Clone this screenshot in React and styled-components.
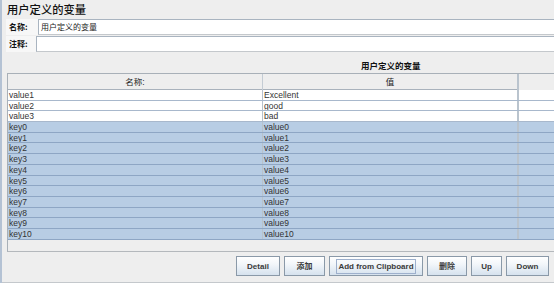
import React from "react";
import styled, { createGlobalStyle } from "styled-components";

const GlobalStyle = createGlobalStyle`
  html, body {
    margin: 0;
    padding: 0;
    background: #eeeeee;
  }
  body {
    font-family: "Liberation Sans", "Noto Sans CJK SC", Arial, sans-serif;
  }
`;

const rows = [
  { key: "value1", value: "Excellent", selected: false },
  { key: "value2", value: "good", selected: false },
  { key: "value3", value: "bad", selected: false },
  ...Array.from({ length: 11 }, (_, i) => ({
    key: `key${i}`,
    value: `value${i}`,
    selected: true,
  })),
];

const buttons = [
  { label: "Detail", width: 44 },
  { label: "添加", width: 41 },
  { label: "Add from Clipboard", width: 94, focused: true },
  { label: "删除", width: 40 },
  { label: "Up", width: 31 },
  { label: "Down", width: 43 },
];

export default function App() {
  return (
    <>
      <GlobalStyle />
      <Page>
        <Title>用户定义的变量</Title>
        <FieldRow>
          <FieldLabel>名称:</FieldLabel>
          <FieldBox $offset={36}>用户定义的变量</FieldBox>
        </FieldRow>
        <FieldRow>
          <FieldLabel>注释:</FieldLabel>
          <FieldBox $offset={34} />
        </FieldRow>
        <TableTitle>用户定义的变量</TableTitle>
        <ScrollPane>
          <HeaderRow>
            <HeaderCell>名称:</HeaderCell>
            <HeaderCell>值</HeaderCell>
            <ExtraCell $header />
          </HeaderRow>
          {rows.map((r) => (
            <Row key={r.key} $selected={r.selected}>
              <Cell>{r.key}</Cell>
              <Cell>{r.value}</Cell>
              <ExtraCell />
            </Row>
          ))}
        </ScrollPane>
        <ButtonBar>
          {buttons.map((b) => (
            <Button key={b.label} $width={b.width}>
              <FocusRing $focused={b.focused}>{b.label}</FocusRing>
            </Button>
          ))}
        </ButtonBar>
        <BottomRule />
      </Page>
    </>
  );
}

const Page = styled.div`
  width: 554px;
  height: 283px;
  box-sizing: border-box;
  overflow: hidden;
  background: #eeeeee;
  border-left: 2px solid #b4c2d4;
  display: flex;
  flex-direction: column;
  color: #222;
`;

const Title = styled.div`
  height: 19px;
  line-height: 18px;
  padding-left: 5px;
  font-size: 11.3px;
  font-weight: 500;
  font-family: "Noto Sans CJK SC", sans-serif;
  color: #111;
  flex-shrink: 0;
`;

const FieldRow = styled.div`
  height: 16px;
  margin-left: 4px;
  margin-bottom: 1px;
  display: flex;
  align-items: stretch;
  background: #f7f7f7;
  flex-shrink: 0;
`;

const FieldLabel = styled.div`
  width: 30px;
  padding-left: 3px;
  font-size: 8px;
  font-weight: bold;
  line-height: 16px;
  font-family: "Noto Sans CJK SC", sans-serif;
  color: #111;
`;

const FieldBox = styled.div`
  flex: 1;
  margin-left: ${(p) => p.$offset - 37}px;
  background: #ffffff;
  border-top: 1px solid #a9b4c0;
  border-left: 1px solid #a9b4c0;
  border-bottom: 1px solid #c4c8cc;
  font-size: 8px;
  line-height: 14px;
  padding-left: 2px;
  font-family: "Noto Sans CJK SC", sans-serif;
  color: #222;
`;

const TableTitle = styled.div`
  margin-top: 5px;
  height: 15px;
  line-height: 14px;
  padding-left: 359px;
  font-size: 8.5px;
  font-weight: bold;
  font-family: "Noto Sans CJK SC", sans-serif;
  color: #111;
  flex-shrink: 0;
`;

const ScrollPane = styled.div`
  margin-left: 5px;
  height: 179px;
  box-sizing: border-box;
  border-top: 1px solid #a8b0b8;
  border-left: 1px solid #a8b0b8;
  border-bottom: 1px solid #b4b8bc;
  background: #eeeeee;
  flex-shrink: 0;
  display: flex;
  flex-direction: column;
`;

const HeaderRow = styled.div`
  height: 15px;
  display: grid;
  grid-template-columns: 255px 255px 1fr;
  border-bottom: 1px solid #a9b2bc;
  background: #eeeeee;
`;

const HeaderCell = styled.div`
  text-align: center;
  font-size: 8.5px;
  line-height: 16px;
  font-family: "Liberation Sans", "Noto Sans CJK SC", sans-serif;
  color: #222;
  border-right: 1px solid #c4ccd4;
`;

const ExtraCell = styled.div`
  border-left: 2px solid #bac4ce;
  margin-left: -1px;
  background: ${(p) => (p.$header ? "#eeeeee" : "transparent")};
`;

const Row = styled.div`
  height: 10.7px;
  box-sizing: border-box;
  display: grid;
  grid-template-columns: 255px 255px 1fr;
  background: ${(p) => (p.$selected ? "#b8cde4" : "#ffffff")};
  border-bottom: 1px solid ${(p) => (p.$selected ? "#8ea6c4" : "#a8b8cc")};
`;

const Cell = styled.div`
  font-size: 8.5px;
  line-height: 10px;
  padding-left: 1px;
  color: #333;
  white-space: nowrap;
  overflow: hidden;
  border-right: 1px solid #b8c2cc;
`;

const ButtonBar = styled.div`
  margin-top: 4px;
  height: 20px;
  display: flex;
  justify-content: flex-end;
  gap: 4px;
  padding-right: 5px;
  flex-shrink: 0;
`;

const Button = styled.div`
  width: ${(p) => p.$width}px;
  height: 20px;
  box-sizing: border-box;
  border: 1px solid #8a99a8;
  background: linear-gradient(#ffffff 0%, #f2f6fa 40%, #d6e2ee 100%);
  display: flex;
  align-items: center;
  justify-content: center;
  font-size: 8px;
  font-weight: bold;
  color: #3a3a3a;
  font-family: "Liberation Sans", "Noto Sans CJK SC", sans-serif;
`;

const FocusRing = styled.span`
  padding: 1px 1px;
  line-height: 11px;
  border: 1px solid ${(p) => (p.$focused ? "#9eb0cc" : "transparent")};
`;

const BottomRule = styled.div`
  margin-top: 6px;
  height: 1px;
  background: #c4c8cc;
  flex-shrink: 0;
`;
